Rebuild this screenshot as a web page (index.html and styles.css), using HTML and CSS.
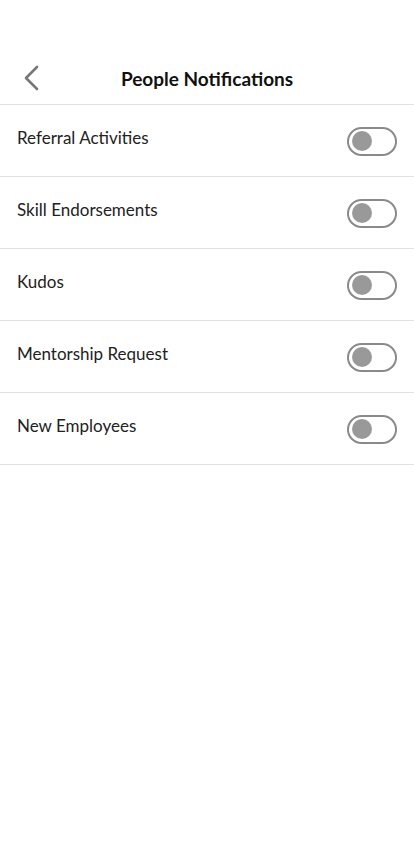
FILE: index.html
```html
<!DOCTYPE html>
<html>
<head>
<meta charset="utf-8">
<link rel="stylesheet" href="styles.css">
</head>
<body>
<div class="screen">
  <header class="header">
    <button class="back" aria-label="Back">
      <svg width="20" height="26" viewBox="0 0 20 26"><path d="M16 2 L5 13 L16 24" fill="none" stroke="#777" stroke-width="2.6" stroke-linecap="round" stroke-linejoin="round"/></svg>
    </button>
    <h1 class="title">People Notifications</h1>
  </header>
  <ul class="list">
    <li class="row"><span class="label">Referral Activities</span><span class="toggle"><span class="knob"></span></span></li>
    <li class="row"><span class="label">Skill Endorsements</span><span class="toggle"><span class="knob"></span></span></li>
    <li class="row"><span class="label">Kudos</span><span class="toggle"><span class="knob"></span></span></li>
    <li class="row"><span class="label">Mentorship Request</span><span class="toggle"><span class="knob"></span></span></li>
    <li class="row"><span class="label">New Employees</span><span class="toggle"><span class="knob"></span></span></li>
  </ul>
</div>
</body>
</html>
```
FILE: styles.css
```css
* { box-sizing: border-box; }
html, body { margin: 0; padding: 0; background: #fff; }
body { font-family: Lato, "Noto Sans", sans-serif; color: #1a1a1a; }
.screen { width: 414px; min-height: 844px; padding-top: 53px; }
.header {
  height: 52px;
  display: flex;
  align-items: center;
  justify-content: center;
  position: relative;
  border-bottom: 1px solid #e2e2e2;
}
.back {
  position: absolute;
  left: 19px;
  top: 11px;
  background: none;
  border: 0;
  padding: 0;
  width: 24px;
  height: 28px;
  display: flex;
  align-items: center;
  justify-content: center;
}
.title {
  margin: 0;
  font-size: 19px;
  font-weight: 700;
  color: #111;
}
.list { list-style: none; margin: 0; padding: 0; }
.row {
  height: 72px;
  border-bottom: 1px solid #e2e2e2;
  display: flex;
  align-items: center;
  justify-content: space-between;
  padding: 0 17px 0 17px;
}
.label { font-size: 17px; color: #222; margin-top: -6px; }
.toggle {
  width: 50px;
  height: 29px;
  border: 2px solid #8a8a8a;
  border-radius: 15px;
  display: flex;
  align-items: center;
  padding-left: 3px;
  margin-top: 1px;
}
.knob {
  width: 20px;
  height: 20px;
  border-radius: 50%;
  background: #999;
}
```
